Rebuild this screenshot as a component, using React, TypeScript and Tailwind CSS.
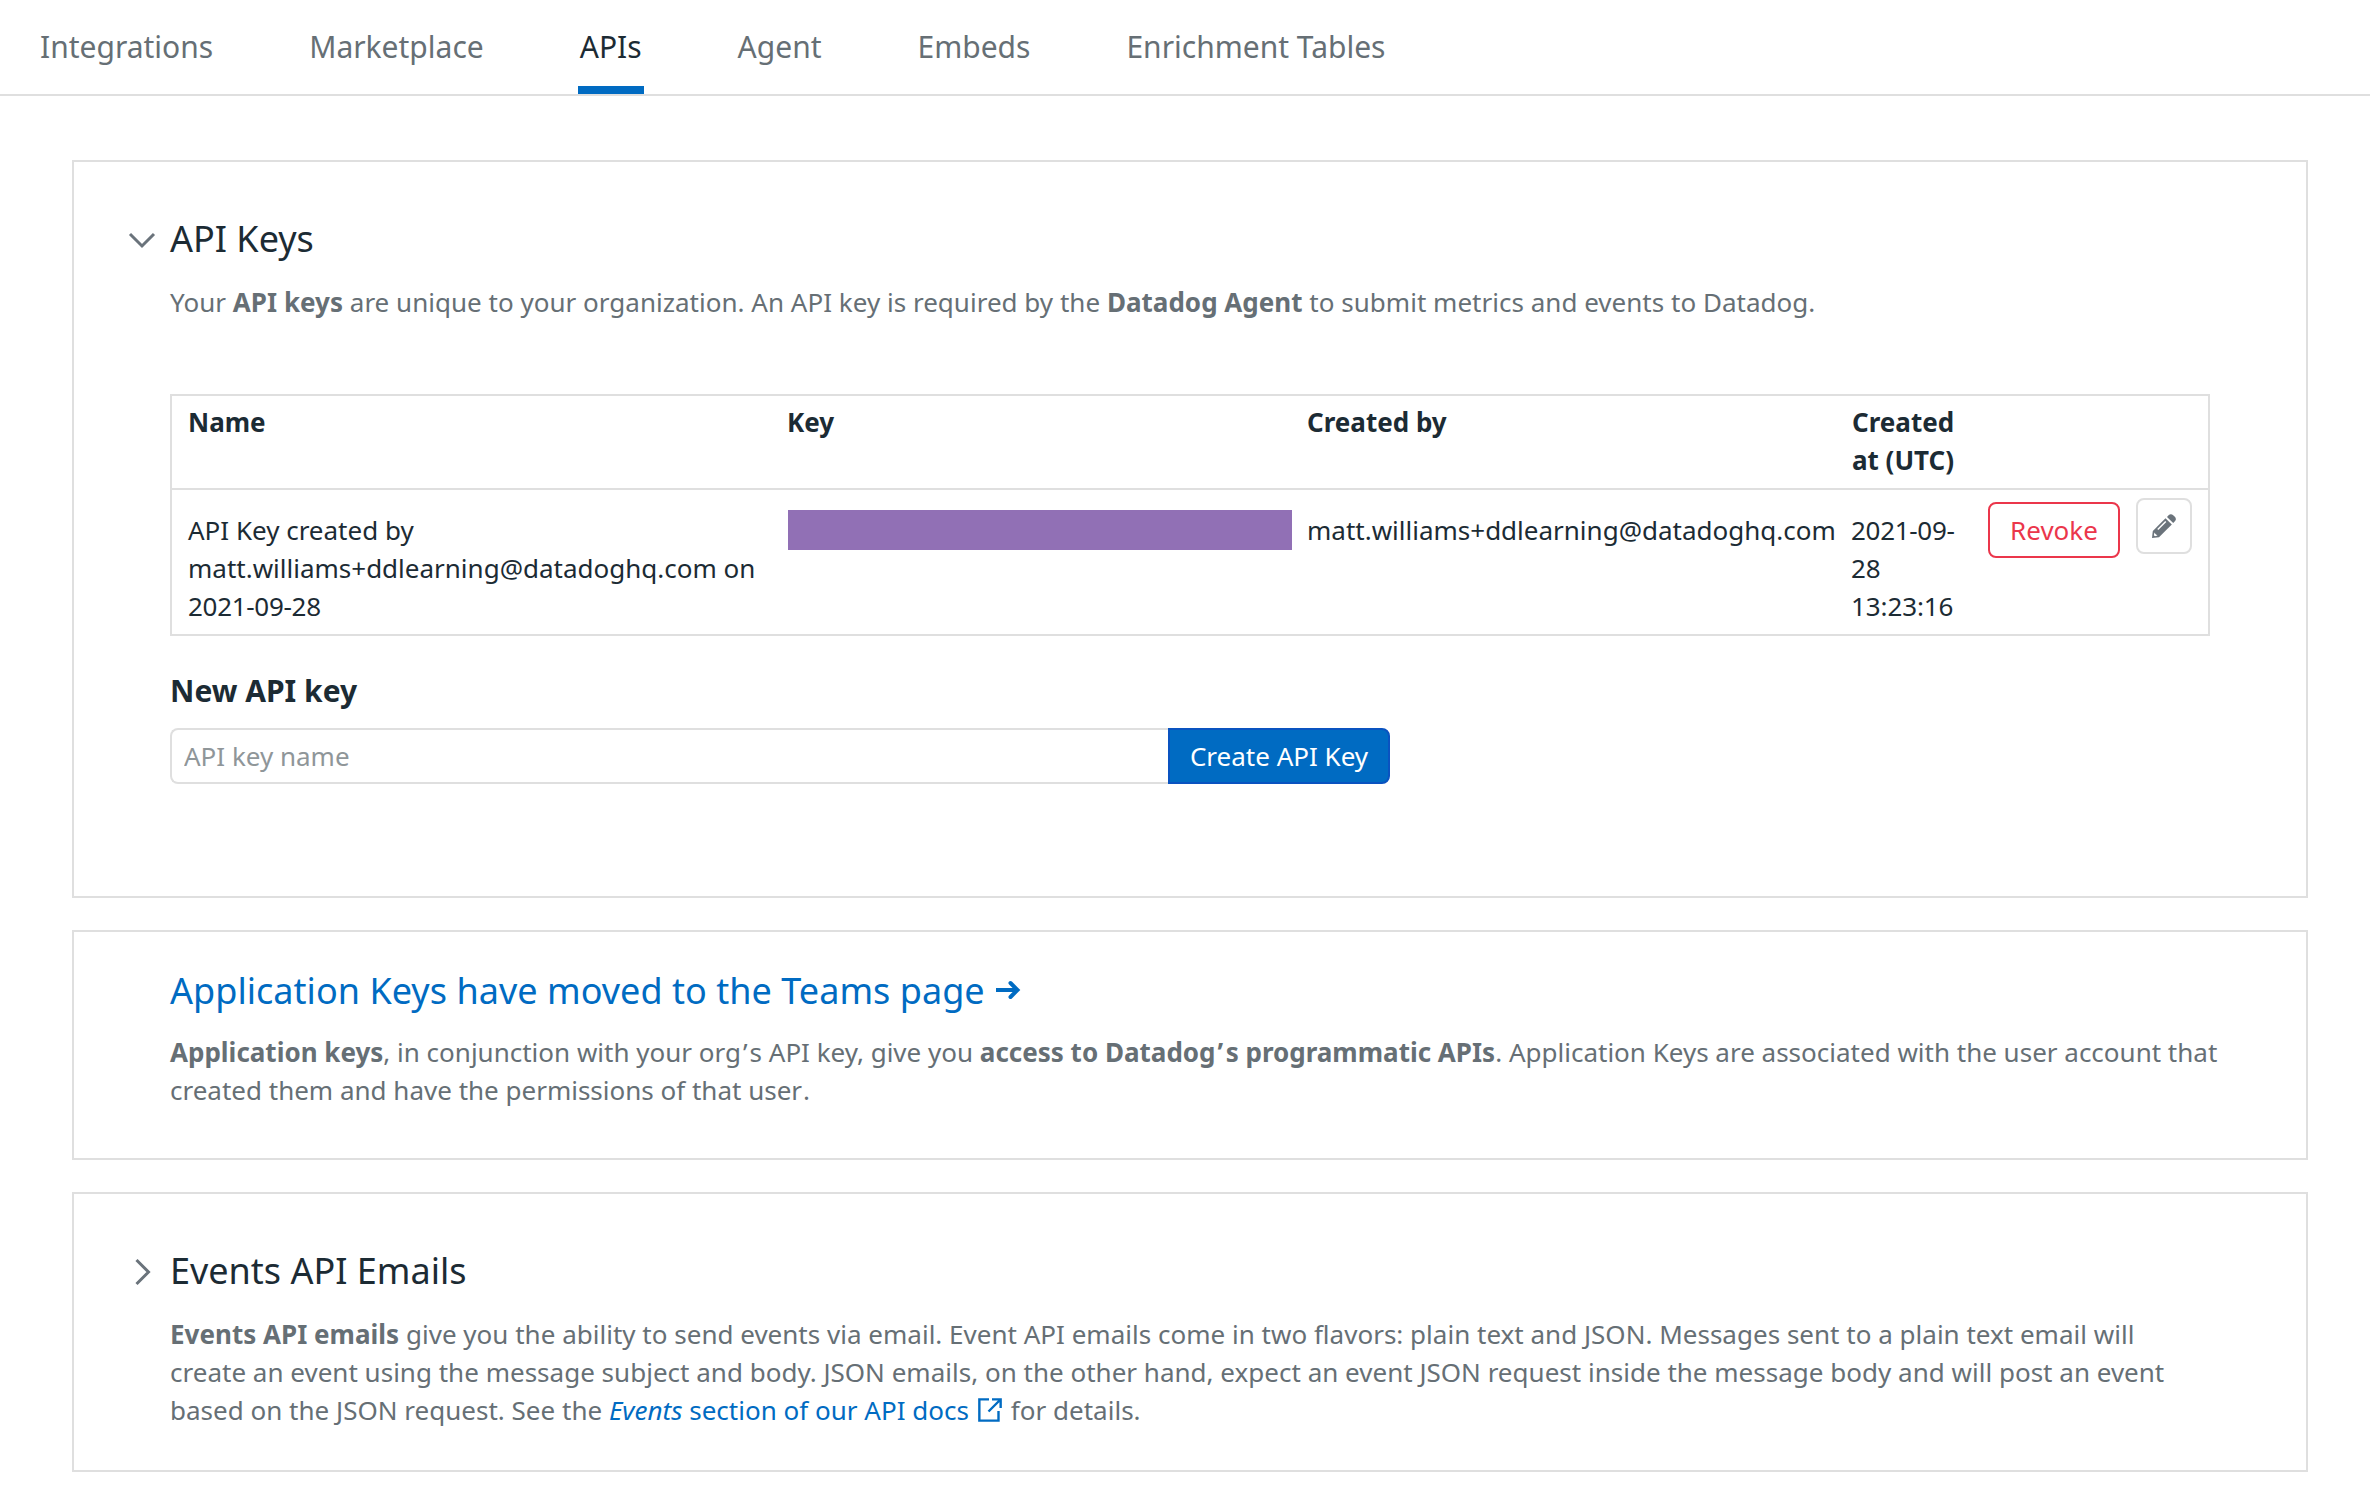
import React from "react";

const tabs = ["Integrations", "Marketplace", "APIs", "Agent", "Embeds", "Enrichment Tables"];

function Card({ className, children }: { className: string; children: React.ReactNode }) {
  return <section className={`border-2 border-[#dfdfdf] pl-24 ${className}`}>{children}</section>;
}

function Chevron({ open }: { open: boolean }) {
  return (
    <svg width="30" height="30" viewBox="0 0 30 30" fill="none" stroke="#6a737b" strokeWidth="3">
      <path d={open ? "M4 10 16 22 28 10" : "M10.5 4 22.5 16 10.5 28"} />
    </svg>
  );
}

function SectionTitle({ open, children }: { open: boolean; children: React.ReactNode }) {
  return (
    <div className="-ml-[44px] flex h-12 items-center gap-[14px]">
      <Chevron open={open} />
      <h2 className="text-[36px] leading-[48px] text-[#1c2b34]">{children}</h2>
    </div>
  );
}

export default function App() {
  return (
    <div className="h-[1486px] w-[2370px] overflow-hidden bg-white font-['Noto_Sans',sans-serif] text-[26px] leading-[38px] text-[#666f75]">
      <nav className="flex h-24 gap-[92px] border-b-2 border-[#dfdfdf] pl-[38px] text-[30px]">
        {tabs.map((t) => (
          <a
            key={t}
            className={
              t === "APIs"
                ? "h-[94px] border-b-8 border-[#006bc2] px-0.5 pt-[28px] text-[#1c2b34]"
                : "h-[94px] px-0.5 pt-[28px]"
            }
          >
            {t}
          </a>
        ))}
      </nav>

      <main className="ml-[72px] mt-16 flex w-[2236px] flex-col gap-8">
        <Card className="h-[738px] pt-[53px]">
          <SectionTitle open>API Keys</SectionTitle>
          <p className="mt-5 tracking-[0.018px]">
            Your <b className="font-bold">API keys</b> are unique to your organization. An API key is required by the{" "}
            <b className="font-bold">Datadog Agent</b> to submit metrics and events to Datadog.
          </p>

          <div className="mt-[73px] h-[242px] w-[2040px] border-2 border-[#dfdfdf] text-[#1c2b34]">
            <div className="grid h-[94px] grid-cols-[599px_520px_545px_1fr] border-b-2 border-[#dfdfdf] pl-4 pt-[7px] font-bold">
              <div>Name</div>
              <div>Key</div>
              <div>Created by</div>
              <div className="w-[120px]">Created at (UTC)</div>
            </div>
            <div className="grid grid-cols-[600px_519px_544px_137px_1fr] pl-4">
              <div className="w-[584px] pt-[21px]">
                API Key created by matt.williams+ddlearning@datadoghq.com on{" "}
                <span className="tracking-[-0.3px]">2021-09-28</span>
              </div>
              <div className="mt-5 h-10 w-[504px] bg-[#9170b5]" />
              <div className="pt-[21px]">matt.williams+ddlearning@datadoghq.com</div>
              <div className="w-[120px] pt-[21px]">
                <span className="tracking-[-0.3px]">2021-09-</span>
                <br />
                28
                <br />
                <span className="tracking-[-0.1px]">13:23:16</span>
              </div>
              <div className="flex gap-4 pt-2">
                <button className="mt-1 h-14 w-[132px] rounded-lg border-2 border-[#eb364b] text-[#eb364b]">Revoke</button>
                <button className="flex h-14 w-14 items-center justify-center rounded-lg border-2 border-[#dfdfdf]">
                  <svg width="24" height="24" viewBox="0 0 24 24" fill="#6a737b">
                    <path d="M0 24 .8 17 13.500 4.300 19.800 10.500 7 23.200Z" />
                    <path d="m15 3 1.800-1.900q2-2 4.700.3 3.800 3 1.600 5.600L21.200 9Z" />
                    <path d="M5.800 15.500 13.800 7.500" stroke="#fff" strokeWidth="1.500" />
                    <path d="M2.500 18.500 3.500 20 5.500 21.500 3 22.300 1.800 21.200Z" fill="#fff" />
                  </svg>
                </button>
              </div>
            </div>
          </div>

          <h3 className="mt-[35px] text-[30px] font-bold leading-[40px] text-[#1c2b34]">New API key</h3>
          <div className="mt-[17px] flex h-14 w-[1220px]">
            <input
              className="w-[998px] rounded-l-lg border-2 border-r-0 border-[#dfdfdf] px-3 placeholder:text-[#8f9699]"
              placeholder="API key name"
            />
            <button className="w-[222px] rounded-r-lg border-2 border-[#0a53c0] bg-[#006bc2] text-white">
              Create API Key
            </button>
          </div>
        </Card>

        <Card className="h-[230px] pt-[35px]">
          <h2 className="flex items-center text-[36px] leading-[48px] tracking-[0.035px] text-[#006bc2]">
            Application Keys have moved to the Teams page
            <svg
              className="ml-[10px] -mt-0.5"
              width="26"
              height="20"
              viewBox="0 0 26 20"
              fill="none"
              stroke="currentColor"
              strokeWidth="4"
            >
              <path d="M1 10h21" />
              <path d="M15.500 3l7 7-7 7" strokeLinecap="round" />
            </svg>
          </h2>
          <p className="mt-[18px] w-[2080px]">
            <b className="font-bold">Application keys</b>, in conjunction with your org<span className="mx-[2px]">’</span>s
            API key, give you{" "}
            <b className="font-bold">
              access to Datadog<span className="ml-[2px] mr-[2.5px]">’</span>s programmatic APIs
            </b>
            . Application Keys are associated with the user account that created them and have the permissions of that
            user<span className="ml-px">.</span>
          </p>
        </Card>

        <Card className="h-[280px] pt-[53px]">
          <SectionTitle open={false}>Events API Emails</SectionTitle>
          <p className="mt-5 w-[2040px] tracking-[0.012px]">
            <b className="font-bold">Events API emails</b> give you the ability to send events via email. Event API
            emails come in two flavors: plain text and JSON. Messages sent to a plain text email will create an event
            using the message subject and body. JSON emails, on the other hand, expect an event JSON request inside the
            message body and will post an event based on the JSON request. See the{" "}
            <a className="text-[#006bc2]">
              <i>Events</i> section of our API docs
              <svg
                className="ml-[9px] mr-[2px] inline-block align-[-2px]"
                width="24"
                height="24"
                viewBox="0 0 24 24"
                fill="none"
                stroke="currentColor"
                strokeWidth="2.400"
              >
                <path d="M11 1.350H1.350v21.300H20.500V13M14 1.350h8.650V10M22 2 10.500 13.500" />
              </svg>
            </a>{" "}
            for details.
          </p>
        </Card>
      </main>
    </div>
  );
}
